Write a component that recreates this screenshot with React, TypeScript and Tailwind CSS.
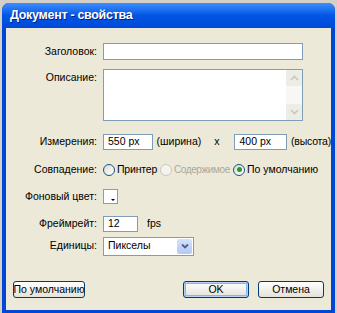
import React from "react";

const font = { fontFamily: '"Liberation Sans", Arial, sans-serif' };

const Label = ({ children }: { children: React.ReactNode }) => (
  <span className="block w-[97px] shrink-0 whitespace-nowrap pr-[6px] text-right text-[10.5px] text-black">
    {children}
  </span>
);

const Field = ({ value, className }: { value?: string; className: string }) => (
  <div
    className={`flex items-center border border-[#7f9db9] bg-white px-[4px] text-[10.5px] text-black ${className}`}
  >
    {value}
  </div>
);

const Radio = ({ checked, disabled }: { checked?: boolean; disabled?: boolean }) => (
  <span
    className={`flex h-[12px] w-[12px] shrink-0 items-center justify-center rounded-full border ${
      disabled ? "border-[#cac8bb] bg-[#f4f3ee]" : "border-[#1c5180] bg-gradient-to-br from-[#dcdcd5] to-white"
    }`}
  >
    {checked && <span className="h-[5px] w-[5px] rounded-full bg-[#21a121]" />}
  </span>
);

const XpButton = ({ label, primary, className }: { label: string; primary?: boolean; className: string }) => (
  <button
    className={`flex h-[17px] items-center justify-center whitespace-nowrap rounded-[3px] border border-[#003c74] bg-gradient-to-b from-white to-[#e3e2da] text-[10.5px] text-black ${
      primary ? "shadow-[inset_0_0_0_1px_#b9d1f7,inset_0_0_0_2px_#8fb1ea]" : ""
    } ${className}`}
  >
    {label}
  </button>
);

export default function App() {
  return (
    <div className="h-[313px] w-[337px] bg-[#d4d0c8] pl-[2px] pt-[3px]" style={font}>
      <div className="flex h-[310px] w-[333px] flex-col overflow-hidden rounded-t-[7px] bg-[#0047d6]">
        {/* title bar */}
        <div className="flex h-[25px] shrink-0 items-center bg-gradient-to-b from-[#3d8dff] via-[#0055e5] to-[#0049d8] pl-[8px]">
          <span className="text-[12.5px] font-bold tracking-[-0.3px] text-white [text-shadow:1px_1px_0_#0a1e7a]">
            Документ - свойства
          </span>
        </div>

        {/* body */}
        <div className="mx-[4px] mb-[3px] flex flex-1 flex-col bg-[#ece9d8] pt-[15px]">
          <div className="flex items-center">
            <Label>Заголовок:</Label>
            <Field className="h-[17px] w-[200px]" />
          </div>

          <div className="mt-[9px] flex items-start">
            <div className="pt-[1px]">
              <Label>Описание:</Label>
            </div>
            <div className="flex h-[52px] w-[200px] border border-[#7f9db9] bg-white">
              <div className="flex-1" />
              <div className="flex w-[16px] flex-col justify-between bg-[#f7f7f3]">
                <div className="flex h-[16px] items-center justify-center rounded-[2px] bg-[#eeede5]">
                  <svg width="9" height="6" viewBox="0 0 9 6">
                    <path d="M1 5 L4.5 1.5 L8 5" fill="none" stroke="#c9c7ba" strokeWidth="1.6" />
                  </svg>
                </div>
                <div className="flex h-[16px] items-center justify-center rounded-[2px] bg-[#eeede5]">
                  <svg width="9" height="6" viewBox="0 0 9 6">
                    <path d="M1 1 L4.5 4.5 L8 1" fill="none" stroke="#c9c7ba" strokeWidth="1.6" />
                  </svg>
                </div>
              </div>
            </div>
          </div>

          <div className="mt-[13px] flex items-center whitespace-nowrap">
            <Label>Измерения:</Label>
            <Field value="550 px" className="h-[16px] w-[51px]" />
            <span className="ml-[4px] text-[10.5px] text-black">(ширина)</span>
            <span className="ml-[13px] text-[10.5px] text-black">x</span>
            <Field value="400 px" className="ml-[15px] h-[16px] w-[54px]" />
            <span className="ml-[4px] text-[10.5px] tracking-[-0.2px] text-black">(высота)</span>
          </div>

          <div className="mt-[12px] flex items-center whitespace-nowrap text-[10.5px]">
            <Label>Совпадение:</Label>
            <span className="flex w-[57px] shrink-0 items-center">
              <Radio />
              <span className="ml-[2px] tracking-[-0.2px] text-black">Принтер</span>
            </span>
            <span className="flex w-[73px] shrink-0 items-center">
              <Radio disabled />
              <span className="ml-[2px] text-[10px] tracking-[-0.4px] text-[#aca899]">Содержимое</span>
            </span>
            <span className="flex items-center">
              <Radio checked />
              <span className="ml-[2px] text-black">По умолчанию</span>
            </span>
          </div>

          <div className="mt-[11px] flex items-center">
            <Label>Фоновый цвет:</Label>
            <div className="relative h-[15px] w-[15px] border border-[#9a9a9a] bg-white">
              <span className="absolute bottom-[2px] right-[2px] h-0 w-0 border-x-[2px] border-t-[2px] border-x-transparent border-t-black" />
            </div>
          </div>

          <div className="mt-[11px] flex items-center">
            <Label>Фреймрейт:</Label>
            <Field value="12" className="h-[16px] w-[35px]" />
            <span className="ml-[9px] text-[10.5px] text-black">fps</span>
          </div>

          <div className="mt-[5px] flex items-center">
            <Label>Единицы:</Label>
            <div className="flex h-[19px] w-[91px] items-center border border-[#7f9db9] bg-white p-[1px]">
              <span className="flex-1 pl-[3px] text-[10.5px] text-black">Пикселы</span>
              <span className="flex h-[15px] w-[15px] items-center justify-center rounded-[2px] bg-gradient-to-b from-[#d5e2fc] to-[#b4c8f5]">
                <svg width="8" height="6" viewBox="0 0 8 6">
                  <path d="M1 1.5 L4 4.5 L7 1.5" fill="none" stroke="#4d6185" strokeWidth="1.8" />
                </svg>
              </span>
            </div>
          </div>

          <div className="mt-auto mb-[12px] flex items-center px-[7px]">
            <XpButton label="По умолчанию" className="w-[72px]" />
            <div className="flex-1" />
            <XpButton label="OK" primary className="w-[66px]" />
            <XpButton label="Отмена" className="ml-[9px] w-[66px]" />
          </div>
        </div>
      </div>
    </div>
  );
}
